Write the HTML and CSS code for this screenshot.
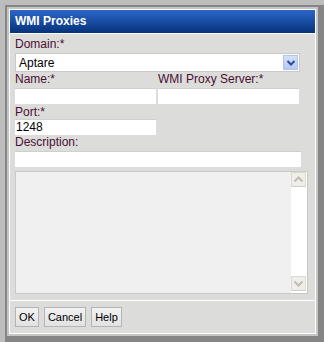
FILE: index.html
```html
<!DOCTYPE html>
<html>
<head>
<meta charset="utf-8">
<link rel="stylesheet" href="styles.css">
</head>
<body>
<div class="shadow">
  <div class="win">
    <div class="dialog">
      <div class="title">WMI Proxies</div>
      <div class="content">
        <div class="label first">Domain:*</div>
        <div class="select">
          <span class="select-text">Aptare</span>
          <span class="drop">
            <svg width="10" height="8" viewBox="0 0 10 8"><polyline points="1.5,2 5,5.5 8.5,2" fill="none" stroke="#2a4c94" stroke-width="2"/></svg>
          </span>
        </div>
        <div class="row">
          <div class="col">
            <div class="label">Name:*</div>
            <div class="input half"></div>
          </div>
          <div class="col">
            <div class="label">WMI Proxy Server:*</div>
            <div class="input half"></div>
          </div>
        </div>
        <div class="label port-label">Port:*</div>
        <div class="input half">1248</div>
        <div class="label">Description:</div>
        <div class="input desc"></div>
        <div class="textarea">
          <div class="ta-body"></div>
          <div class="scroll">
            <div class="sbtn"><svg width="11" height="7" viewBox="0 0 11 7"><polyline points="1.5,5.5 5.5,1.5 9.5,5.5" fill="none" stroke="#bdbdb6" stroke-width="2"/></svg></div>
            <div class="sbtn"><svg width="11" height="7" viewBox="0 0 11 7"><polyline points="1.5,1.5 5.5,5.5 9.5,1.5" fill="none" stroke="#bdbdb6" stroke-width="2"/></svg></div>
          </div>
        </div>
      </div>
      <div class="footer">
        <button class="btn">OK</button>
        <button class="btn">Cancel</button>
        <button class="btn">Help</button>
      </div>
    </div>
  </div>
</div>
</body>
</html>
```
FILE: styles.css
```css
html, body {
  margin: 0;
  padding: 0;
}
body {
  background: #bdbdbd;
  width: 324px;
  height: 342px;
  overflow: hidden;
  font-family: "Liberation Sans", Arial, sans-serif;
  font-size: 12px;
}
.shadow {
  margin: 5px 0 0 5px;
  width: 311px;
  height: 329px;
  padding: 2px 6px 6px 2px;
  background: #858585;
}
.win {
  width: 307px;
  height: 325px;
  padding: 2px;
  background: #c6c6c6;
}
.dialog {
  width: 305px;
  height: 323px;
  border: 1px solid #ffffff;
  background: #dcdddb;
  display: flex;
  flex-direction: column;
}
.title {
  height: 23px;
  line-height: 23px;
  border-bottom: 1px solid #ffffff;
  background: linear-gradient(to bottom, #2c66c6 0%, #1a4fa6 45%, #053279 100%);
  color: #ffffff;
  font-weight: bold;
  font-size: 12px;
  padding-left: 5px;
}
.content {
  height: 257px;
  padding: 3px 6px 6px 5px;
  display: flex;
  flex-direction: column;
}
.label {
  height: 14px;
  line-height: 14px;
  color: #4a0f32;
  margin-bottom: 2px;
  white-space: nowrap;
}
.port-label {
  margin-top: 1px;
  margin-bottom: 0;
}
.select {
  width: 283px;
  height: 17px;
  border: 1px solid #c9cac8;
  background: #ffffff;
  display: flex;
  align-items: center;
  justify-content: space-between;
  color: #000000;
}
.select-text {
  padding-left: 3px;
  font-size: 12px;
}
.drop {
  width: 15px;
  height: 15px;
  margin-right: 1px;
  background: linear-gradient(to bottom, #d4e0fa, #b6c9f2);
  border: 1px solid #b0c2ea;
  box-sizing: border-box;
  display: flex;
  align-items: center;
  justify-content: center;
}
.row {
  display: flex;
  gap: 2px;
}
.col {
  display: flex;
  flex-direction: column;
}
.input {
  height: 15px;
  line-height: 15px;
  background: #ffffff;
  border-top: 1px solid #cfd0ce;
  box-sizing: content-box;
  color: #000000;
  padding-left: 1px;
}
.half {
  width: 140px;
}
.desc {
  width: 285px;
}
.textarea {
  margin-top: 4px;
  width: 291px;
  height: 121px;
  border: 1px solid #c8c9c7;
  background: #f0f0f0;
  display: flex;
}
.ta-body {
  flex: 1;
}
.scroll {
  width: 16px;
  background: #ffffff;
  display: flex;
  flex-direction: column;
  justify-content: space-between;
  padding-bottom: 2px;
}
.sbtn {
  width: 15px;
  height: 15px;
  background: #efeee8;
  border: 1px solid #dcdbd2;
  border-bottom-color: #cfcec5;
  box-sizing: border-box;
  display: flex;
  align-items: center;
  justify-content: center;
}
.footer {
  flex: 1;
  border-top: 1px solid #ffffff;
  padding: 6px 0 0 5px;
  display: flex;
  align-items: flex-start;
  gap: 5px;
}
.btn {
  height: 20px;
  margin: 0;
  padding: 0 3px;
  font-family: "Liberation Sans", Arial, sans-serif;
  font-size: 11px;
  color: #000000;
  background: linear-gradient(to bottom, #f2f2f2, #e2e2e2);
  border: 1px solid #b4b4b4;
  border-radius: 0;
}
```
